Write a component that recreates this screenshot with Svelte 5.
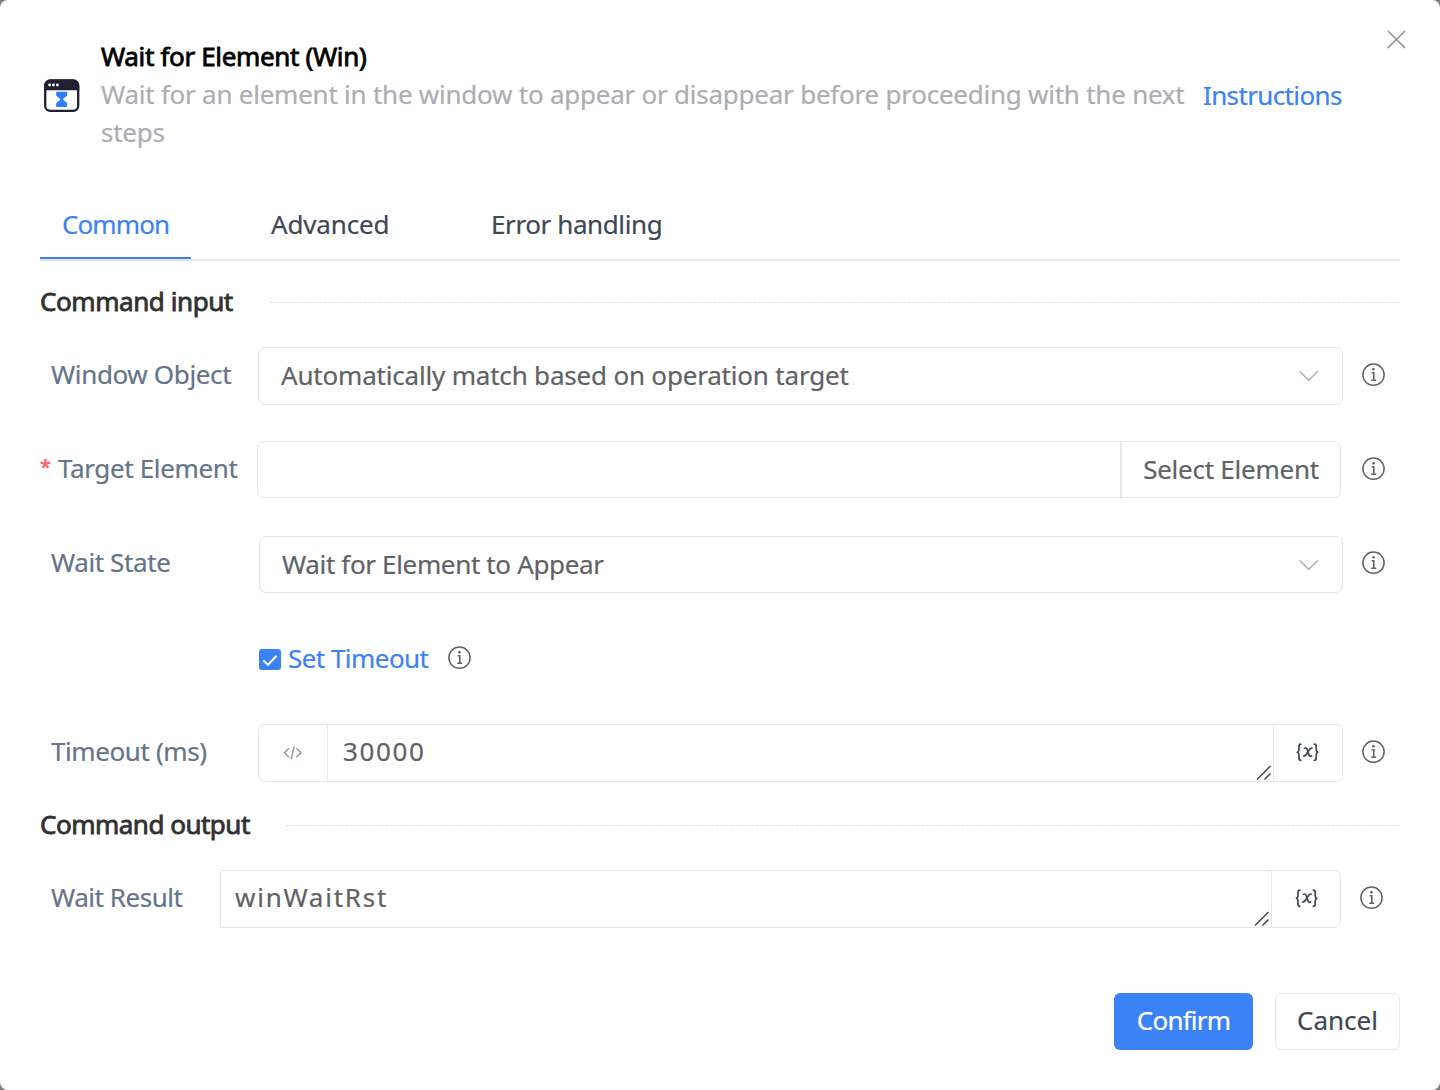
<script lang="ts">
  let tabs = ['Common', 'Advanced', 'Error handling'];
  let active = $state('Common');
  let timeoutOn = $state(true);
</script>

{#snippet info()}
  <svg class="info" viewBox="0 0 24 24" width="24" height="24" fill="none" stroke="#606266">
    <circle cx="12.500" cy="11.700" r="10.600" stroke-width="1.500" />
    <path d="M10.600 9.800h2.200v7.200M10.200 17.200h4.900" stroke-width="1.600" />
    <circle cx="12.500" cy="6.200" r="1.300" fill="#606266" stroke="none" />
  </svg>
{/snippet}

{#snippet chevron()}
  <svg class="chevron" viewBox="0 0 20 12" width="20" height="12" fill="none" stroke="#a8abb2" stroke-width="1.4" stroke-linecap="round" stroke-linejoin="round">
    <path d="M1 1.800 9.700 10.200l8.700-8.400" />
  </svg>
{/snippet}

{#snippet grip()}
  <svg class="grip" viewBox="0 0 16 16" width="16" height="16" fill="none" stroke="#444" stroke-width="1.500">
    <path d="M1 14.500 14.500 1M8.500 14.500l6-6" />
  </svg>
{/snippet}

{#snippet variable()}
  <svg viewBox="0 0 24 20" width="24" height="20" fill="none" stroke="#3d4757" stroke-width="1.700" stroke-linecap="round" stroke-linejoin="round">
    <path d="M4.800 1.200C3.300 1.200 3 2 3 3.500v2.800c0 1.600-.4 2.600-1.600 3 1.200.4 1.600 1.400 1.600 3v2.800c0 1.500.3 2.300 1.800 2.300" />
    <path d="M18.400 1.200c1.500 0 1.800.8 1.800 2.300v2.800c0 1.600.4 2.600 1.600 3-1.200.4-1.600 1.400-1.600 3v2.800c0 1.500-.3 2.300-1.800 2.300" />
    <path d="M8.500 5.200c1.800-.6 2.400.2 3 2.200l1.200 3.700c.6 1.900 1.200 2.500 2.900 1.900M16 5.100c-1.600-.3-2.400.9-4.100 3.900s-2.300 4.300-4.300 4" />
  </svg>
{/snippet}

<div class="backdrop">
  <div class="dialog">
    <button class="close" aria-label="Close">
      <svg viewBox="0 0 20 20" width="20" height="20" stroke="#909399" stroke-width="1.500" stroke-linecap="round">
        <path d="M2.200 2.200l16.400 16.400M18.600 2.200 2.200 18.600" />
      </svg>
    </button>

    <header>
      <svg class="logo" viewBox="0 0 36 34" width="36" height="34">
        <rect x="1.200" y="1.500" width="33" height="30.300" rx="5" fill="#fff" stroke="#231f33" stroke-width="2.300" />
        <path d="M.1 11.300V6.500a6 6 0 0 1 6-6h23.200a6 6 0 0 1 6 6v4.800z" fill="#231f33" />
        <g fill="#fff"><circle cx="5.600" cy="6" r="1.400" /><circle cx="9.500" cy="6" r="1.400" /><circle cx="13.400" cy="6" r="1.400" /></g>
        <path d="M12.800 12.800h9.700q.7 0 .7.700v2.200q0 1.300-1.200 2l-2.400 1.800q-1.100.8 0 1.700l2.400 1.800q1.200.8 1.200 2v2.200q0 .7-.7.700h-9.700q-.7 0-.7-.7V25q0-1.200 1.200-2l2.400-1.800q1.100-.9 0-1.700l-2.400-1.800q-1.200-.7-1.200-2v-2.200q0-.7.700-.7z" fill="#2b80ff" />
      </svg>
      <div class="heading">
        <h1>Wait for Element (Win)</h1>
        <p>Wait for an element in the window to appear or disappear before proceeding with the next<br />steps</p>
      </div>
      <a class="help" href="#help">Instructions</a>
    </header>

    <nav>
      {#each tabs as tab}
        <button class="tab" class:active={tab === active} onclick={() => (active = tab)}>{tab}</button>
      {/each}
    </nav>

    <div class="section input"><h2>Command input</h2><i></i></div>

    <div class="row r1">
      <span class="label window">Window Object</span>
      <div class="box select"><span class="auto">Automatically match based on operation target</span>{@render chevron()}</div>
      {@render info()}
    </div>

    <div class="row r2">
      <span class="label required"><b>*</b><span class="target">Target Element</span></span>
      <div class="box picker"><div class="slot"></div><button class="pick">Select Element</button></div>
      {@render info()}
    </div>

    <div class="row r3">
      <span class="label state">Wait State</span>
      <div class="box select"><span class="appear">Wait for Element to Appear</span>{@render chevron()}</div>
      {@render info()}
    </div>

    <div class="row r4">
      <button class="check" aria-label="Set Timeout" aria-pressed={timeoutOn} onclick={() => (timeoutOn = !timeoutOn)}>
        <svg viewBox="0 0 22 21" width="22" height="21">
          <rect width="22" height="21" rx="3" fill="#3b82f6" />
          {#if timeoutOn}<path d="M4.300 11.500l4.700 4.300 8.600-9" fill="none" stroke="#fff" stroke-width="2" />{/if}
        </svg>
        <span class="set">Set Timeout</span>
      </button>
      {@render info()}
    </div>

    <div class="row r5">
      <span class="label timeout">Timeout (ms)</span>
      <div class="box field">
        <div class="addon code">
          <svg viewBox="0 0 20 14" width="20" height="14" fill="none" stroke="#9098a6" stroke-width="1.500">
            <path d="M6 2.200 1.500 6.700l4.500 4.500M13.400 2.200 17.900 6.700l-4.500 4.500M11.200.3 8.200 13.100" />
          </svg>
        </div>
        <div class="value number">30000{@render grip()}</div>
        <div class="addon var">{@render variable()}</div>
      </div>
      {@render info()}
    </div>

    <div class="section output"><h2>Command output</h2><i></i></div>

    <div class="row r6">
      <span class="label result">Wait Result</span>
      <div class="box field">
        <div class="value name">winWaitRst{@render grip()}</div>
        <div class="addon var">{@render variable()}</div>
      </div>
      {@render info()}
    </div>

    <footer>
      <button class="btn confirm">Confirm</button>
      <button class="btn cancel">Cancel</button>
    </footer>
  </div>
</div>

<style>
  :global(body) { margin: 0; }
  * { box-sizing: border-box; }
  .backdrop { background: #7f7f7f; width: 1440px; height: 1090px; }
  .dialog {
    position: relative; width: 1440px; height: 1090px; padding: 37px 40px 0;
    background: #fff; border-radius: 8px; overflow: hidden;
    font: 400 26px/38px "Noto Sans", sans-serif; color: #606266; white-space: nowrap;
    -webkit-text-stroke: .2px currentColor;
    display: flex; flex-direction: column;
  }
  button { font: inherit; letter-spacing: inherit; color: inherit; background: none; border: 0; padding: 0; margin: 0; cursor: pointer; }
  svg { display: block; flex: none; }
  h1, h2, p { margin: 0; font-size: inherit; }
  .close { position: absolute; left: 1386px; top: 29px; width: 20px; height: 20px; }

  header { display: flex; height: 114px; align-items: center; flex: none; }
  .logo { margin: 4px 21px 0 4px; }
  .heading { width: 1102px; }
  h1, h2 { font-weight: 400; -webkit-text-stroke: .8px currentColor; }
  h1 { color: #000; letter-spacing: -.34px; }
  p { color: #adadb4; letter-spacing: -.24px; }
  .help { color: #3b82f6; text-decoration: none; padding-top: 1px; letter-spacing: -.63px; }

  nav { display: flex; height: 71px; margin-top: 39px; border-bottom: 2px solid #e4e7ed; flex: none; }
  .tab { height: 69px; color: #3d4757; text-align: left; border-bottom: 2px solid transparent; padding-left: 22px; }
  .tab.active { color: #3b82f6; border-color: #3b82f6; }
  .tab:nth-child(1) { width: 151px; letter-spacing: -.9px; }
  .tab:nth-child(2) { width: 220px; padding-left: 80px; letter-spacing: -.15px; }
  .tab:nth-child(3) { padding-left: 80px; letter-spacing: -.4px; }

  .section { display: flex; align-items: center; height: 38px; flex: none; }
  .section h2 { color: #303133; padding-bottom: 2px; }
  .section i { flex: 1; border-top: 1px dashed #dcdfe6; }
  .input { margin-top: 22px; }
  .input h2 { width: 229px; letter-spacing: -.43px; }
  .output { margin-top: 24px; }
  .output h2 { width: 245px; letter-spacing: -.5px; }

  .row { display: flex; height: 57px; flex: none; }
  .label { padding-left: 11px; width: 218px; line-height: 54px; color: #64748b; flex: none; }
  .box { display: flex; align-items: center; border: 1px solid #e4e7ed; border-radius: 7px; width: 1085px; flex: none; }
  .info { margin: 16px 0 0 18px; }
  .r1 { height: 58px; margin-top: 26px; }
  .r2 { margin-top: 36px; }
  .r3 { margin-top: 38px; }
  .r4 { margin-top: 37px; padding-left: 219px; height: 58px; }
  .r5 { height: 58px; margin-top: 36px; }
  .r6 { height: 58px; margin-top: 26px; }
  .select { justify-content: space-between; padding: 0 23px 0 22px; }
  .select span, .set { padding-bottom: 2px; }
  .r2 .label { width: 217px; }
  .r2 .box { width: 1084px; }
  .r2 .info { margin-left: 20px; }
  .r3 .label { width: 219px; line-height: 53px; }
  .r3 .box { width: 1084px; }
  .r3 .info { margin-top: 15px; }
  .required { display: flex; }
  .label.required { padding-left: 0; }
  .required b { width: 18px; color: #f56c6c; font-weight: 700; font-size: 20px; line-height: 51px; }
  .slot { flex: 1; }
  .pick { width: 220px; height: 55px; padding-bottom: 2px; border-left: 2px solid #e4e7ed; letter-spacing: -.25px; }
  .check { display: flex; align-items: center; height: 58px; gap: 7px; color: #3b82f6; width: 170px; }
  .r4 .info { margin-top: 16px; }
  .field { align-items: stretch; }
  .addon { width: 69px; display: flex; align-items: center; justify-content: center; flex: none; }
  .code { border-right: 1px solid #e4e7ed; }
  .var { border-left: 1px solid #e4e7ed; }
  .value { flex: 1; padding-left: 15px; line-height: 53px; position: relative; }
  .grip { position: absolute; right: 1px; bottom: 0; }
  .r6 .label { width: 180px; }
  .r6 .box { width: 1121px; border-radius: 0 7px 7px 0; }
  .r6 .value { padding-left: 14px; }
  .r6 .var { padding-left: 1px; }

  .window, .target { letter-spacing: -.36px; }
  .auto { letter-spacing: -.19px; }
  .state { letter-spacing: -.4px; }
  .appear { letter-spacing: -.35px; }
  .set { letter-spacing: -.54px; }
  .timeout { letter-spacing: -.4px; }
  .result { letter-spacing: -.46px; }
  .number { letter-spacing: 1.65px; }
  .name { letter-spacing: 1.75px; }

  footer { display: flex; justify-content: flex-end; gap: 22px; margin-top: 65px; height: 57px; }
  .btn { border-radius: 6px; height: 57px; padding-bottom: 3px; }
  .confirm { width: 139px; background: #3b82f6; color: #fff; letter-spacing: -.8px; }
  .cancel { width: 125px; border: 1px solid #e4e7ed; color: #3d4757; }
</style>
